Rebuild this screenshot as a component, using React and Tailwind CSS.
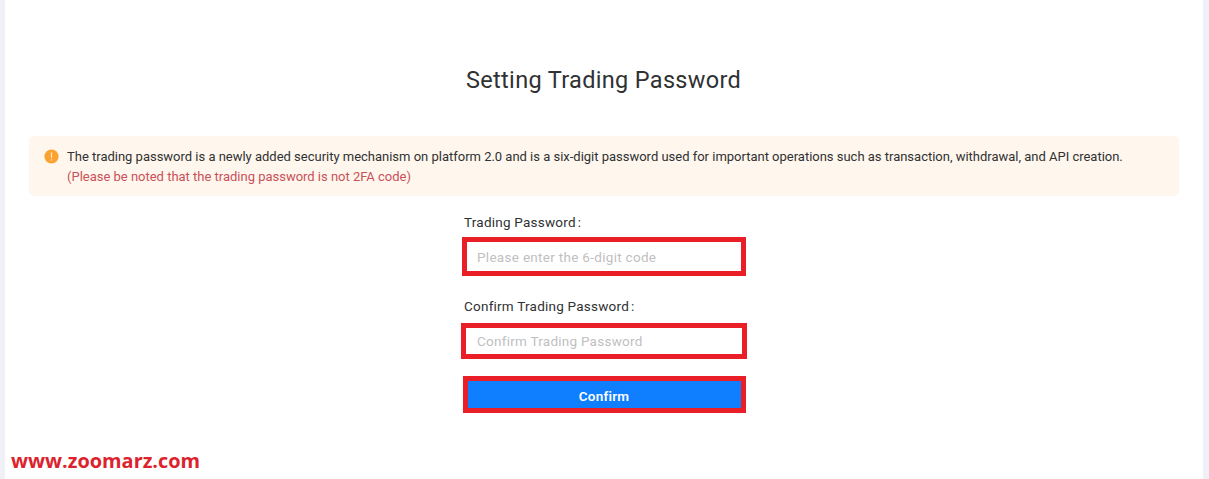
export default function App() {
  return (
    <div className="h-[479px] overflow-hidden bg-[#f0f1f6] pl-[5px] pr-[6px] font-['Roboto',sans-serif] text-[#303133]">
      <main className="flex h-full flex-col bg-white pl-6 pr-6 pt-16">
        <h1 className="ml-[437px] h-8 whitespace-nowrap text-[23.5px] leading-8 tracking-[0.33px]">
          Setting Trading Password
        </h1>
        <div className="mt-10 flex h-[60px] rounded-[5px] bg-[#fff7ed] pl-[15px] pt-[11px] text-[13px] leading-5">
          <svg viewBox="0 0 15 15" className="mt-[2px] size-[15px] shrink-0">
            <circle cx="7.5" cy="7.5" r="7.1" fill="#fba331" />
            <path d="M7.5 3.5v5.3M7.5 10.2v1.2" stroke="#fff3df" strokeWidth="1.1" />
          </svg>
          <div className="ml-2 whitespace-nowrap">
            <p className="tracking-[-0.01px]">
              The trading password is a newly added security mechanism on platform 2.0 and is a six-digit password used for important operations such as transaction, withdrawal, and API creation.
            </p>
            <p className="tracking-[-0.01px] text-[#c9505a]">
              (Please be noted that the trading password is not 2FA code)
            </p>
          </div>
        </div>
        <form className="ml-[432px] flex w-[286px] flex-col text-[13.5px]" onSubmit={(e) => e.preventDefault()}>
          <label htmlFor="password" className="ml-[3px] mt-4 h-5 whitespace-nowrap leading-5 tracking-[0.23px]">
            Trading Password<span className="ml-[2px]">:</span>
          </label>
          <input
            id="password"
            placeholder="Please enter the 6-digit code"
            className="ml-px mt-[5px] h-[39px] w-[284px] border-5 border-[#e91e26] bg-white pl-[10px] pt-px tracking-[0.3px] outline-none placeholder:text-[#bfbfbf]"
          />
          <label htmlFor="confirm" className="ml-[3px] mt-5 h-5 whitespace-nowrap leading-5 tracking-[0.23px]">
            Confirm Trading Password<span className="ml-[2px]">:</span>
          </label>
          <input
            id="confirm"
            placeholder="Confirm Trading Password"
            className="mt-[7px] h-9 w-[286px] border-5 border-[#e91e26] bg-white pl-[11px] tracking-[0.25px] outline-none placeholder:text-[#bfbfbf]"
          />
          <button className="ml-[2px] mt-[17px] h-[37px] w-[283px] border-5 border-[#e91e26] bg-[#0f7eff] pr-px pt-[3px] font-semibold leading-6 tracking-[0.2px] text-white">
            Confirm
          </button>
        </form>
        <p className="-ml-[18px] mt-[34px] whitespace-nowrap font-['Open_Sans',sans-serif] text-[19.9px] font-bold leading-7 text-[#dc232d]">
          www.zoomarz.com
        </p>
      </main>
    </div>
  );
}
